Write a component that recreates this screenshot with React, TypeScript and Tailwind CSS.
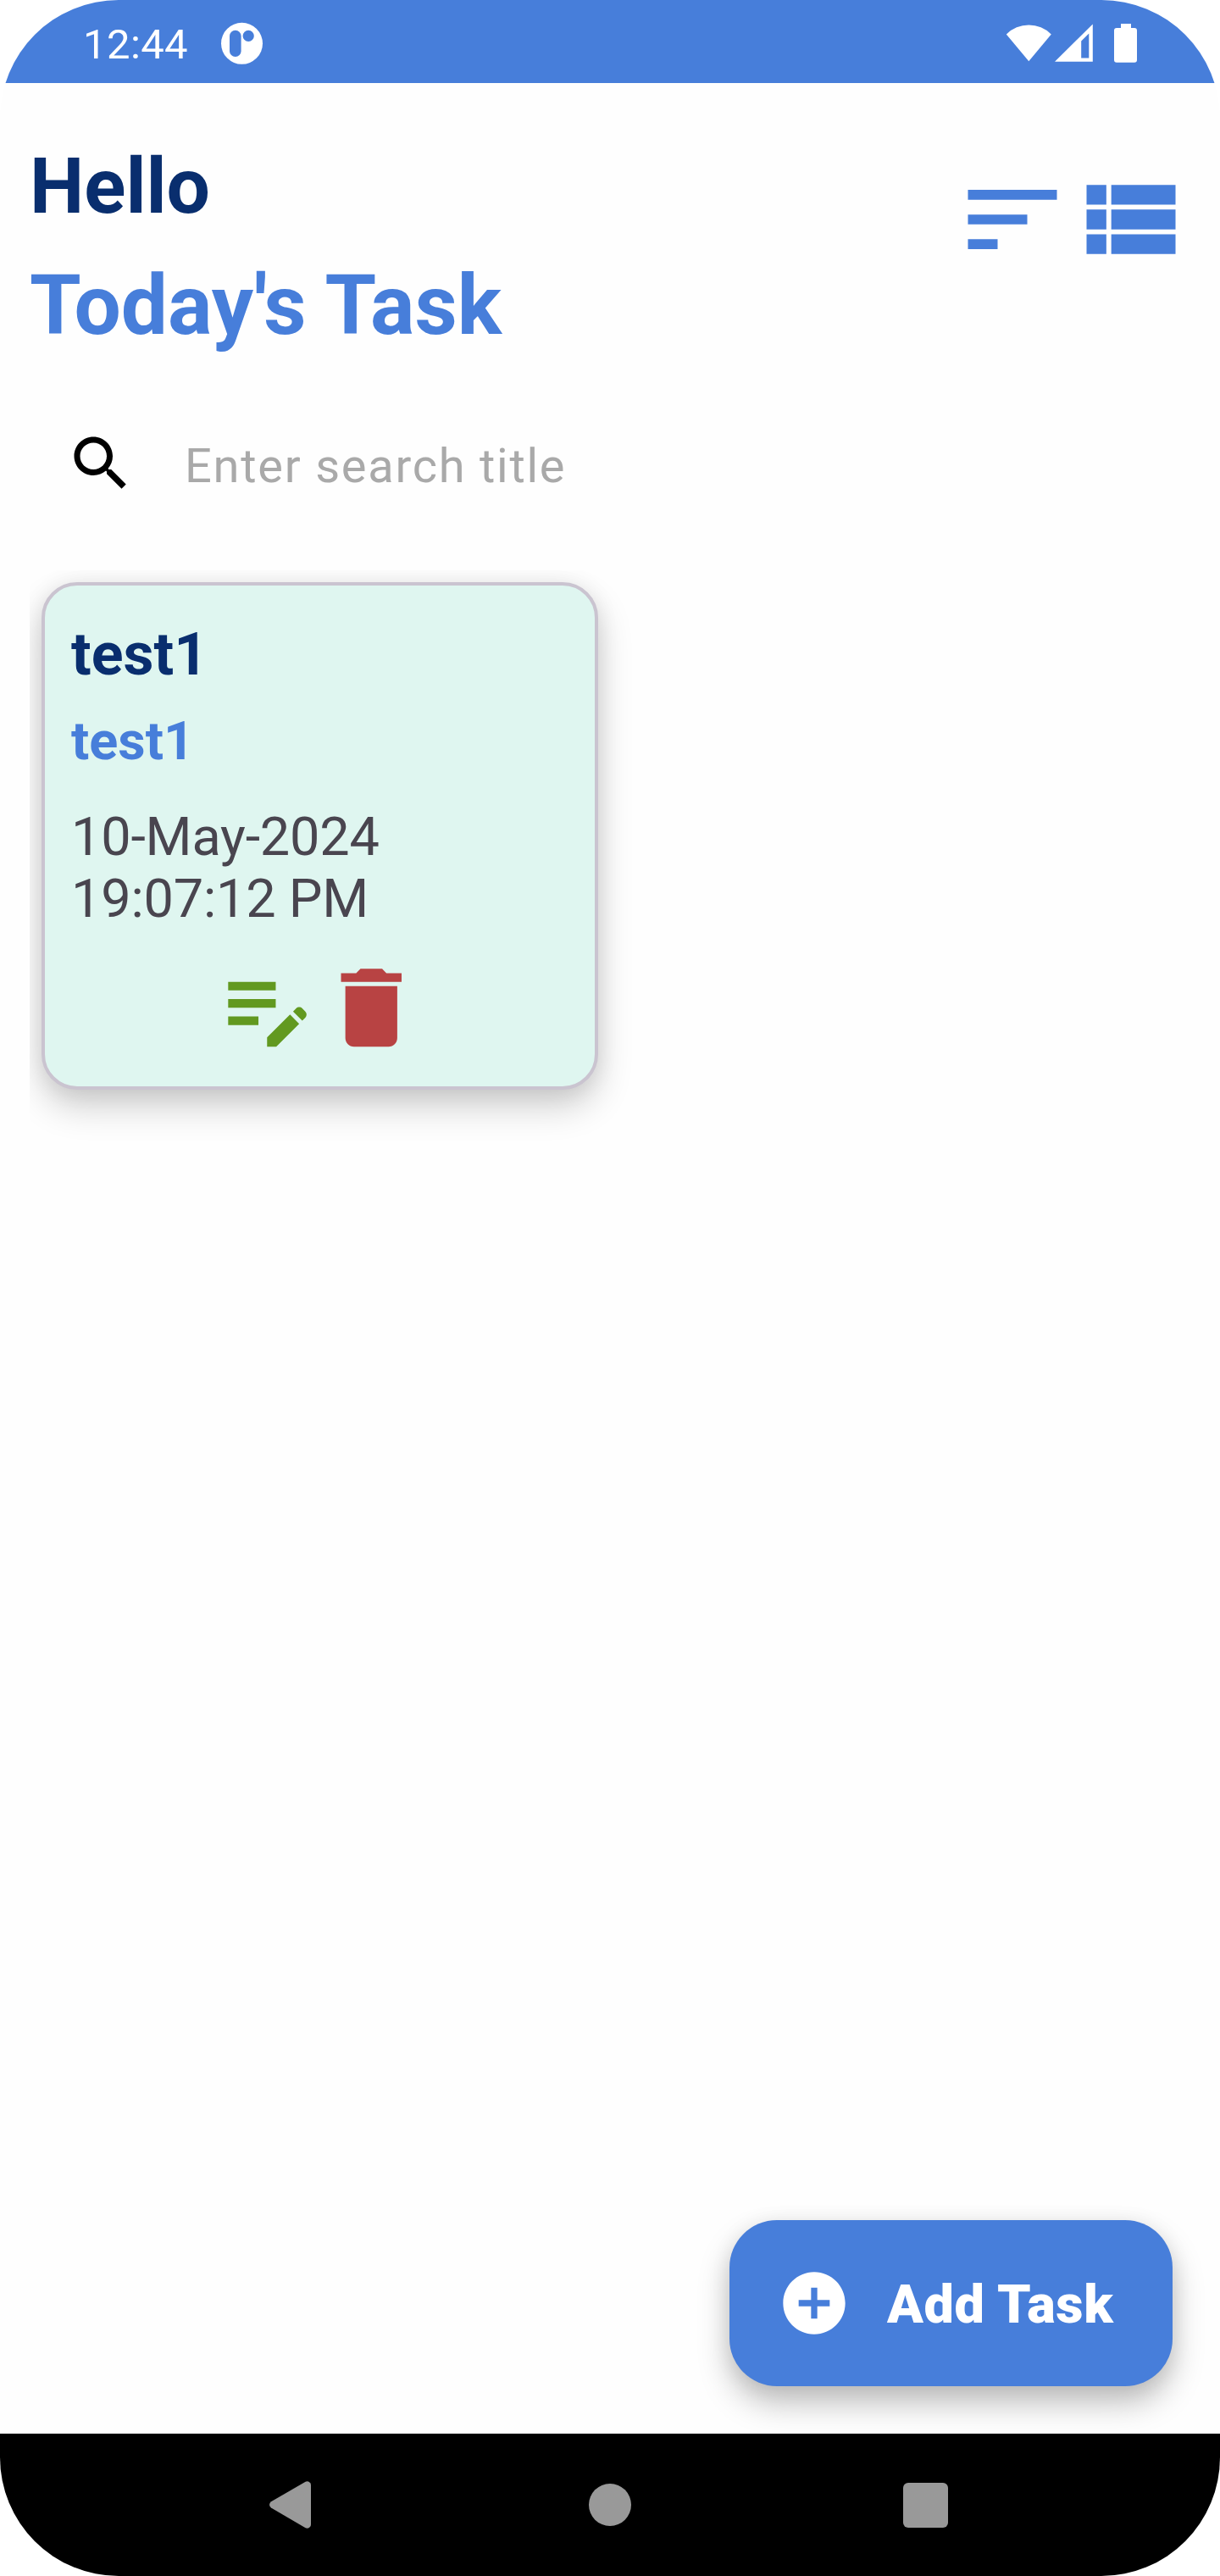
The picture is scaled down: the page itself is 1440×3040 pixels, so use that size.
import React from "react";

type IconProps = { className?: string; path: string };

function Icon({ className, path }: IconProps) {
  return (
    <svg viewBox="0 0 24 24" className={className} fill="currentColor" aria-hidden="true">
      <path d={path} />
    </svg>
  );
}

const paths = {
  sort: "M3 18h6v-2H3v2zM3 6v2h18V6H3zm0 7h12v-2H3v2z",
  list: "M3 14h4v-4H3v4zm0 5h4v-4H3v4zM3 9h4V5H3v4zm5 5h13v-4H8v4zm0 5h13v-4H8v4zM8 5v4h13V5H8z",
  search:
    "M15.5 14h-.79l-.28-.27C15.41 12.59 16 11.11 16 9.5 16 5.91 13.09 3 9.5 3S3 5.91 3 9.5 5.91 16 9.5 16c1.61 0 3.09-.59 4.23-1.57l.27.28v.79l5 4.99L20.49 19l-4.99-5zm-6 0C7.01 14 5 11.99 5 9.5S7.01 5 9.5 5 14 7.01 14 9.5 11.99 14 9.5 14z",
  edit: "M3 10h11v2H3v-2zm0-2h11V6H3v2zm0 8h7v-2H3v2zm15.01-3.13.71-.71c.39-.39 1.02-.39 1.41 0l.71.71c.39.39.39 1.02 0 1.41l-.71.71-2.12-2.12zm-.71.71-5.3 5.3V21h2.12l5.3-5.3-2.12-2.12z",
  trash: "M6 19c0 1.1.9 2 2 2h8c1.1 0 2-.9 2-2V7H6v12zM19 4h-3.5l-1-1h-5l-1 1H5v2h14V4z",
  add: "M12 2C6.48 2 2 6.48 2 12s4.48 10 10 10 10-4.48 10-10S17.52 2 12 2zm5 11h-4v4h-2v-4H7v-2h4V7h2v4h4v2z",
};

function StatusBar() {
  return (
    <div className="flex h-[98px] shrink-0 items-start bg-[#477eda] pl-[98px] pr-[98px] text-white">
      <span className="mt-[25px] w-[163px] whitespace-nowrap text-[49px] leading-[56px] tracking-[0.4px]">12:44</span>
      <svg viewBox="0 0 50 50" className="mt-[26px] h-[50px] w-[50px]" aria-hidden="true">
        <circle cx="24.5" cy="25.3" r="24.5" fill="#fff" />
        <rect x="10" y="9.7" width="13.6" height="31.3" rx="6.8" fill="#477eda" />
        <circle cx="32.2" cy="16.4" r="6.6" fill="#477eda" />
      </svg>
      <svg viewBox="0 0 156 48" className="ml-auto mr-[-1px] mt-[27px] h-[48px] w-[156px]" fill="#fff" aria-hidden="true">
        <path d="M0.8 13.4A37.5 37.5 0 0 1 53.8 13.4L27.3 45.3Z" />
        <path fillRule="evenodd" d="M58 45.8L102.8 1.5V45.8ZM89.2 21.6V41.5H98.3V12.5Z" />
        <path d="M136 1h12v5h4a3 3 0 0 1 3 3v34.700a3 3 0 0 1-3 3h-21a3 3 0 0 1-3-3V9a3 3 0 0 1 3-3h5z" />
      </svg>
    </div>
  );
}

function Header() {
  return (
    <header className="flex items-start justify-between px-[35px] pt-[69px] font-bold">
      <div>
        <h1 className="text-[91px] leading-[107px] text-[#092e6e]">Hello</h1>
        <h2 className="mt-[29px] text-[98px] leading-[115px] text-[#477eda]">Today&apos;s Task</h2>
      </div>
      <div className="mt-[22px] flex text-[#477eda]">
        <Icon className="size-[140px]" path={paths.sort} />
        <Icon className="size-[140px]" path={paths.list} />
      </div>
    </header>
  );
}

function TaskCard() {
  return (
    <article className="flex h-[599px] w-[657px] flex-col rounded-[42px] border-4 border-[#cac4d0] bg-[#dff6f0] px-[31px] shadow-[0_20px_42px_rgba(0,0,0,0.19),0_2px_26px_rgba(0,0,0,0.08)]">
      <h3 className="mt-[40px] text-[70px] font-bold leading-[82px] text-[#092e6e]">test1</h3>
      <p className="mt-[25px] text-[63px] font-bold leading-[74px] text-[#477eda]">test1</p>
      <p className="mt-[39px] w-[420px] text-[63px] leading-[73px] tracking-[-0.2px] text-[#49454f]">10-May-2024 19:07:12 PM</p>
      <div className="mr-[2px] mt-[31px] flex justify-center">
        <Icon className="size-[122.500px] text-[#629920]" path={paths.edit} />
        <Icon className="size-[122.500px] text-[#b84343]" path={paths.trash} />
      </div>
    </article>
  );
}

function NavBar() {
  return (
    <nav className="flex h-[168px] shrink-0 items-center bg-black">
      <svg viewBox="0 0 49 56" className="ml-[318px] h-[56px] w-[49px]" fill="#999" aria-hidden="true">
        <path d="M2 24.300L42.600 0.700Q46 -0.600 48.200 2.200Q49 3.300 49 5V51Q49 52.700 48.200 53.800Q46 56.600 42.600 55.300L2 31.500Q-2 28 2 24.300Z" />
      </svg>
      <span className="ml-[328px] size-[50px] rounded-full bg-[#999]" />
      <span className="ml-[321px] size-[53px] rounded-[6px] bg-[#999]" />
    </nav>
  );
}

export default function App() {
  return (
    <div className="h-[3040px] w-[1440px] bg-white font-['Roboto',sans-serif]">
      <div className="flex h-full flex-col overflow-hidden rounded-[140px] bg-[#fefefe]">
        <StatusBar />
        <main className="relative flex flex-1 flex-col">
          <Header />
          <label className="mt-[87px] flex h-[84px] items-center pl-[77px]">
            <Icon className="size-[84px] text-black" path={paths.search} />
            <input
              type="text"
              placeholder="Enter search title"
              className="ml-[57px] mt-[5px] w-[900px] bg-transparent text-[56px] leading-[66px] tracking-[1.75px] outline-none placeholder:text-[#a9a9a9]"
            />
          </label>
          <section className="ml-[35px] mt-[84px] h-[700px] overflow-hidden pl-[14px] pt-[14px]">
            <TaskCard />
          </section>
          <button className="absolute bottom-[56px] right-[56px] flex h-[196px] w-[523px] items-center rounded-[56px] bg-[#477eda] pl-[56px] text-white shadow-[0_20px_36px_rgba(0,0,0,0.25),0_2px_24px_rgba(0,0,0,0.07)]">
            <Icon className="size-[88px]" path={paths.add} />
            <span className="ml-[42px] mt-[4px] whitespace-nowrap text-[63px] font-black leading-[74px] tracking-[0.6px]">Add Task</span>
          </button>
        </main>
        <NavBar />
      </div>
    </div>
  );
}
